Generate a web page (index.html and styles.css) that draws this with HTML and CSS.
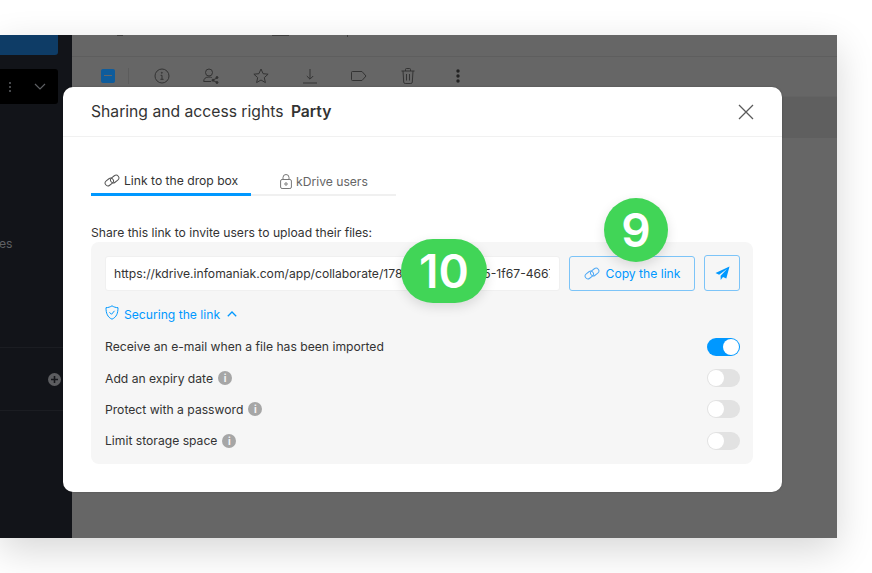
FILE: index.html
```html
<!DOCTYPE html>
<html lang="en">
<head>
<meta charset="utf-8">
<title>Sharing and access rights</title>
<link rel="stylesheet" href="styles.css">
</head>
<body>
<div class="window">
  <aside class="sidebar">
    <div class="side-btn"></div>
    <div class="side-drive">
      <svg class="side-dots" width="4" height="12" viewBox="0 0 4 12"><circle cx="2" cy="2" r="1" /><circle cx="2" cy="6" r="1" /><circle cx="2" cy="10" r="1" /></svg>
      <svg width="12" height="8" viewBox="0 0 12 8" fill="none" stroke="#5e6064" stroke-width="1.2"><path d="M1 1l5 5 5-5"/></svg>
    </div>
    <div class="side-label">es</div>
    <div class="side-section">
      <svg width="13" height="13" viewBox="0 0 13 13"><circle cx="6.5" cy="6.5" r="6.5" fill="#5c5d60"/><path d="M6.5 3v7M3 6.5h7" stroke="#17181c" stroke-width="1.6"/></svg>
    </div>
  </aside>
  <main class="content">
    <div class="topbar">
      <span class="tick tick-a"></span>
      <span class="tick tick-b"></span>
      <span class="tick tick-c"></span>
    </div>
    <div class="toolbar">
      <span class="check"><i></i></span>
      <span class="tool-sep"></span>
      <svg width="16" height="16" viewBox="0 0 16 16" fill="none" stroke="#333" stroke-width="1"><circle cx="8" cy="8" r="7"/><path d="M6.6 7.3H8v4M6.4 11.3h3.2"/><circle cx="7.8" cy="4.8" r=".5"/></svg>
      <svg width="16" height="16" viewBox="0 0 16 16" fill="none" stroke="#333" stroke-width="1"><circle cx="6" cy="4.5" r="3.5"/><path d="M.7 13.5c0-3 2-4.5 5.3-4.5 1 0 2 .2 2.7.6M.7 13.5h7.5M10 12l4-2M10 12.5l4 2"/><circle cx="14" cy="9.5" r="1" fill="#333"/><circle cx="10" cy="12.2" r="1" fill="#333"/><circle cx="14" cy="14.5" r="1" fill="#333"/></svg>
      <svg width="16" height="16" viewBox="0 0 16 16" fill="none" stroke="#333" stroke-width="1"><path d="M8 1l2.1 4.700 5 .5-3.800 3.400 1.100 5L8 12l-4.400 2.600 1.100-5L.9 6.200l5-.5z"/></svg>
      <svg width="16" height="16" viewBox="0 0 16 16" fill="none" stroke="#333" stroke-width="1"><path d="M8 1v10M4.800 8L8 11.200 11.200 8M1 15h14"/></svg>
      <svg width="16" height="12" viewBox="0 0 16 12" fill="none" stroke="#333" stroke-width="1"><path d="M1.500 1.500h9.500L15 6l-4 4.500H1.500a1 1 0 0 1-1-1v-7a1 1 0 0 1 1-1z"/></svg>
      <svg width="14" height="16" viewBox="0 0 14 16" fill="none" stroke="#333" stroke-width="1"><path d="M.5 3h13M4.500 3V1.500a1 1 0 0 1 1-1h3a1 1 0 0 1 1 1V3M2 3l.7 11a1.500 1.500 0 0 0 1.500 1.500h5.600a1.500 1.500 0 0 0 1.500-1.500L12 3M5.500 6v6.500M8.500 6v6.500"/></svg>
      <svg class="tool-more" width="4" height="14" viewBox="0 0 4 14" fill="#222"><circle cx="2" cy="2" r="1.700"/><circle cx="2" cy="7" r="1.700"/><circle cx="2" cy="12" r="1.700"/></svg>
    </div>
    <div class="row-selected"></div>
  </main>

  <section class="modal">
    <header class="modal-head">
      <h1 class="modal-title">Sharing and access rights <strong>Party</strong></h1>
      <svg class="close" width="16" height="16" viewBox="0 0 16 16" fill="none" stroke="#5a5a5a" stroke-width="1.300"><path d="M1 1l14 14M15 1L1 15"/></svg>
    </header>
    <div class="modal-body">
      <nav class="tabs">
        <div class="tab tab-active">
          <svg width="16" height="13" viewBox="0 0 16 13" fill="none" stroke="#555" stroke-width="1"><use href="#link"/></svg>
          Link to the drop box
        </div>
        <div class="tab tab-plain">
          <svg width="12" height="15" viewBox="0 0 12 15" fill="none" stroke="#777" stroke-width="1"><rect x=".6" y="5.5" width="10.800" height="9" rx="1.5"/><path d="M3 5.500V3.500a3 3 0 0 1 6 0v2"/><circle cx="6" cy="10" r="1.200"/></svg>
          kDrive users
        </div>
      </nav>
      <p class="intro">Share this link to invite users to upload their files:</p>
      <div class="panel">
        <div class="link-row">
          <div class="url"><span class="url-text">https://kdrive.infomaniak.com/app/collaborate/1786/a6d8e2ca7f5-1f67-4667-a5b3-9c2e</span></div>
          <button class="btn btn-copy">
            <svg width="16" height="13" viewBox="0 0 16 13" fill="none" stroke="#4fa9f5" stroke-width="1"><use href="#link"/></svg>
            Copy the link
          </button>
          <button class="btn btn-send">
            <svg width="15" height="15" viewBox="0 0 15 15" fill="#0098ff"><path d="M14.500.5L.5 7l3.600 1.800L12 3 5.600 9.700l.1 4.300 2.300-3 3.300 1.600z"/></svg>
          </button>
        </div>
        <div class="secure">
          <svg class="shield" width="14" height="15" viewBox="0 0 14 15" fill="none" stroke="#0098ff" stroke-width="1"><path d="M7 .8c1.800 1.200 3.800 1.800 6 1.900 0 5.500-1.500 9.500-6 11.500C2.500 12.200 1 8.200 1 2.700 3.200 2.600 5.200 2 7 .8z"/><path d="M4.500 7.300l2 2 3-3.500"/></svg>
          <span>Securing the link</span>
          <svg class="chev" width="10" height="6" viewBox="0 0 10 6" fill="none" stroke="#0098ff" stroke-width="1.300"><path d="M.8 5.200L5 1l4.200 4.200"/></svg>
        </div>
        <ul class="options">
          <li class="option"><span>Receive an e-mail when a file has been imported</span><span class="switch switch-on"></span></li>
          <li class="option"><span>Add an expiry date</span><span class="info">i</span><span class="switch"></span></li>
          <li class="option"><span>Protect with a password</span><span class="info">i</span><span class="switch"></span></li>
          <li class="option"><span>Limit storage space</span><span class="info">i</span><span class="switch"></span></li>
        </ul>
      </div>
    </div>
  </section>

  <div class="badge badge-9">9</div>
  <div class="badge badge-10">10</div>
</div>

<svg class="defs" width="0" height="0">
  <defs>
    <g id="link">
      <rect x="0.8" y="5.2" width="9" height="5.600" rx="2.800" transform="rotate(-38 5.300 8)"/>
      <rect x="6.200" y="2.200" width="9" height="5.600" rx="2.800" transform="rotate(-38 10.700 5)"/>
    </g>
  </defs>
</svg>
</body>
</html>
```

FILE: styles.css
```css
* { box-sizing: border-box; }

html, body {
  margin: 0;
  height: 100%;
  background: #fff;
  overflow: hidden;
}

body {
  padding-top: 35px;
  font-family: Inter, "Liberation Sans", sans-serif;
  color: #333;
}

.window {
  position: relative;
  display: flex;
  width: 837px;
  height: 503px;
  background: #666;
  box-shadow: 0 12px 36px rgba(0, 0, 0, .16);
}

.sidebar {
  flex: 0 0 72px;
  display: flex;
  flex-direction: column;
  background: #121419;
  color: #5e6064;
}

.side-btn {
  width: 58px;
  height: 20px;
  background: #0e3c66;
  border-radius: 0 0 3px 0;
}

.side-drive {
  display: flex;
  align-items: center;
  justify-content: flex-end;
  gap: 20px;
  width: 58px;
  height: 35px;
  margin-top: 14px;
  padding-right: 12px;
  background: #000;
  border-radius: 0 3px 3px 0;
}

.side-dots { fill: #5e6064; margin-right: 2px; }

.side-label {
  margin-top: 131px;
  height: 18px;
  margin-left: -1px;
  font-size: 12.2px;
  line-height: 18px;
}

.side-section {
  display: flex;
  align-items: center;
  justify-content: flex-end;
  height: 64px;
  margin-top: 94px;
  padding-right: 11px;
  border-top: 1px solid #1b1d22;
  border-bottom: 1px solid #1b1d22;
}

.content {
  flex: 1;
  display: flex;
  flex-direction: column;
}

.topbar {
  display: flex;
  align-items: flex-start;
  height: 22px;
  border-bottom: 1px solid #5e5e5e;
}

.tick { height: 1px; background: #3d3d3d; }

.tick-a { width: 6px; margin-left: 45px; }

.tick-b { width: 17px; margin-left: 149px; }

.tick-c { width: 1px; height: 2px; margin-left: 58px; }

.toolbar {
  display: flex;
  align-items: center;
  gap: 33.4px;
  height: 40px;
  padding: 0 0 2px 29px;
  border-bottom: 1px solid #636363;
}

.check {
  display: flex;
  align-items: center;
  justify-content: center;
  width: 14px;
  height: 14px;
  margin-right: -20px;
  background: #0e5c9c;
  border-radius: 2px;
}

.check i { width: 8px; height: 1.5px; background: #666; }

.tool-sep { width: 1px; height: 16px; margin-right: -9px; background: #5c5c5c; }

.tool-more { margin-left: 8px; }

.row-selected {
  height: 41px;
  background: #5f5f5f;
}

.modal {
  position: absolute;
  left: 63px;
  top: 52px;
  width: 719px;
  height: 405px;
  background: #fff;
  border-radius: 10px;
  box-shadow: 0 0 2px rgba(0, 0, 0, .25);
}

.modal-head {
  display: flex;
  align-items: center;
  justify-content: space-between;
  height: 50px;
  padding: 0 28px;
  border-bottom: 1px solid #f1f1f1;
}

.modal-title {
  margin: 0;
  font-size: 15.7px;
  line-height: 48px;
  font-weight: 400;
  color: #333;
}

.modal-title strong { margin-left: 3px; font-weight: 600; }

.modal-body { padding: 28px 28px 0; }

.tabs {
  display: flex;
  width: 305px;
  height: 31px;
  border-bottom: 2px solid #f0f0f0;
  font-size: 12.15px;
}

.tab {
  display: flex;
  align-items: center;
  gap: 4px;
  height: 31px;
}

.tab-active {
  width: 160px;
  padding: 3px 0 0 13px;
  color: #333;
  border-bottom: 3px solid #0098ff;
}

.tab-plain {
  padding: 2px 0 0 29px;
  color: #666;
}

.intro {
  margin: 28px 0 0;
  height: 18px;
  font-size: 12.15px;
  line-height: 18px;
}

.panel {
  width: 662px;
  height: 222px;
  padding: 13px 13px 0 14px;
  background: #f6f6f6;
  border-radius: 8px;
}

.link-row {
  display: flex;
  align-items: center;
  height: 36px;
}

.url {
  flex: 0 0 455px;
  min-width: 0;
  height: 35px;
  padding: 0 9px 0 8px;
  font-size: 12.15px;
  background: #fff;
  border: 1px solid #f0f0f0;
  border-radius: 3px;
}

.url-text {
  display: block;
  overflow: hidden;
  white-space: nowrap;
  line-height: 33px;
}

.btn {
  display: flex;
  align-items: center;
  justify-content: center;
  height: 35px;
  padding: 0;
  font-family: inherit;
  font-size: 12.15px;
  color: #0098ff;
  background: transparent;
  border: 1px solid #7cc4f8;
  border-radius: 3px;
}

.btn-copy { width: 126px; gap: 6px; margin-left: 9px; }

.btn-send { width: 36px; height: 36px; margin-left: 9px; }

.secure {
  display: flex;
  align-items: center;
  gap: 4px;
  height: 18px;
  margin-top: 14px;
  font-size: 12.15px;
  color: #0098ff;
}

.secure .shield { margin: -3px 1px 0 0; }

.secure .chev { margin-left: 3px; }

.options {
  margin: 8px 0 0;
  padding: 0;
  list-style: none;
}

.option {
  display: flex;
  align-items: center;
  gap: 5px;
  height: 31.4px;
  font-size: 12.15px;
}

.info {
  display: flex;
  align-items: center;
  justify-content: center;
  width: 14px;
  height: 14px;
  font-size: 10px;
  font-weight: 700;
  color: #f6f6f6;
  background: #a6a6a6;
  border-radius: 50%;
}

.switch {
  position: relative;
  width: 33px;
  height: 18px;
  margin-left: auto;
  background: #e2e2e2;
  border-radius: 9px;
}

.switch::after {
  content: "";
  position: absolute;
  left: 1px;
  top: 1px;
  width: 16px;
  height: 16px;
  background: #fff;
  border-radius: 50%;
}

.switch-on { background: #0098ff; }

.switch-on::after { left: 16px; }

.badge {
  position: absolute;
  display: flex;
  align-items: center;
  justify-content: center;
  height: 64px;
  font-size: 46px;
  font-weight: 600;
  color: #fff;
  background: #41d557;
  border-radius: 32px;
  box-shadow: 0 4px 12px rgba(0, 0, 0, .12);
}

.badge-9 { left: 604px; top: 163px; width: 64px; }

.badge-10 { left: 401px; top: 204px; width: 86px; }

.defs { position: absolute; }
```
